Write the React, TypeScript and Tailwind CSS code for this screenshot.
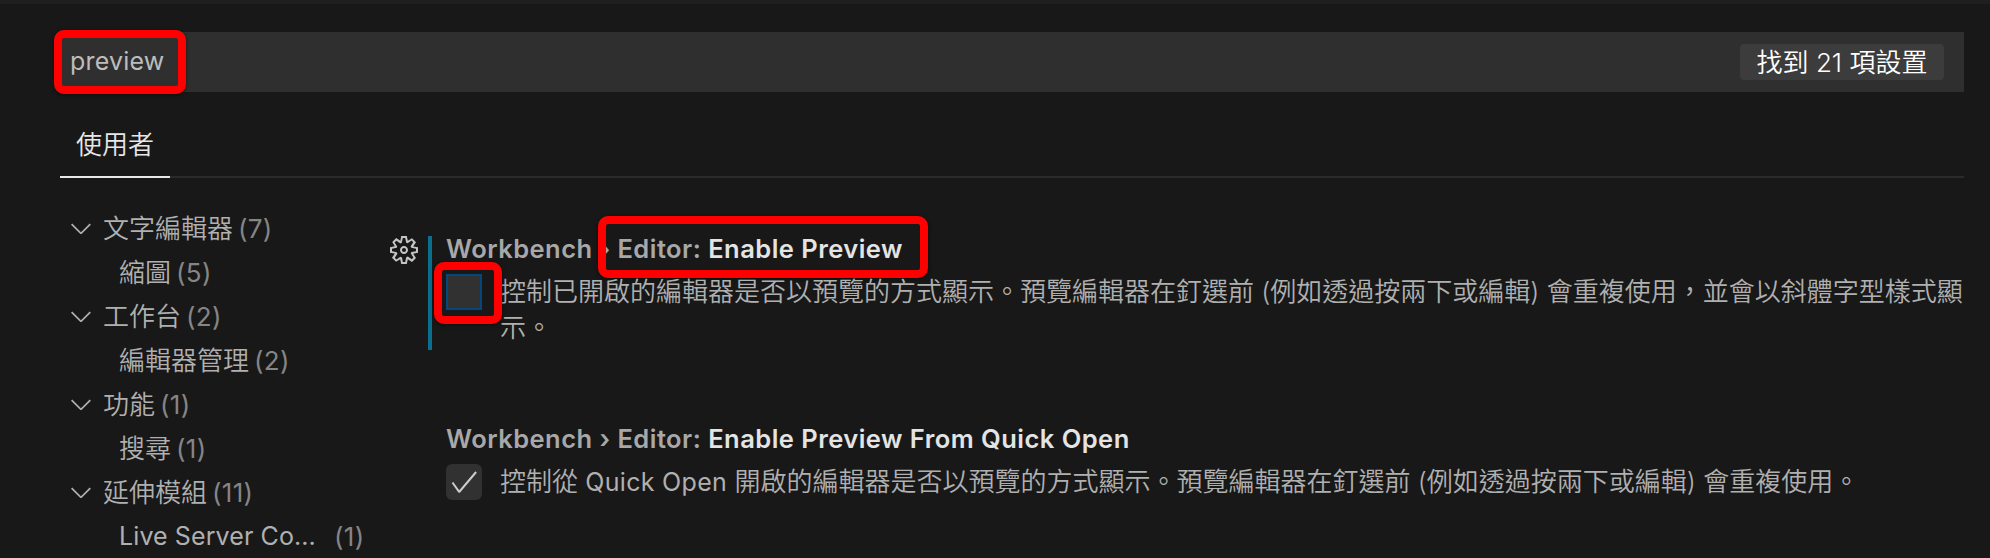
import type { ReactNode } from "react";
import { VscCheck, VscChevronDown, VscGear } from "react-icons/vsc";

type TreeRow = { label: string; count: number; child?: boolean; latin?: boolean };

const rows: TreeRow[] = [
  { label: "文字編輯器", count: 7 },
  { label: "縮圖", count: 5, child: true },
  { label: "工作台", count: 2 },
  { label: "編輯器管理", count: 2, child: true },
  { label: "功能", count: 1 },
  { label: "搜尋", count: 1, child: true },
  { label: "延伸模組", count: 11 },
  { label: "Live Server Co...", count: 1, child: true, latin: true },
];

function Mark({ className }: { className: string }) {
  return (
    <div
      className={`pointer-events-none absolute rounded-[10px] border-8 border-[#ff0000] shadow-[0_1px_4px_rgba(0,0,0,0.5)] ${className}`}
    />
  );
}

function Title({ name, children }: { name: string; children?: ReactNode }) {
  return (
    <h3 className="relative flex h-9 items-center whitespace-pre text-[25.5px] font-[560] leading-9 tracking-[0.47px] text-[#a8a8a8]">
      Workbench › Editor: <span className="text-[#e4e4e4]">{name}</span>
      {children}
    </h3>
  );
}

export default function App() {
  return (
    <div className="h-[558px] w-[1990px] overflow-hidden border-t-4 border-[#1f1f1f] bg-[#181818] pl-[60px] pr-[26px] pt-7 font-['Inter','Noto_Sans_CJK_TC',sans-serif] text-[26px] text-[#b0b0b0]">
      <div className="relative flex h-[60px] items-center justify-between bg-[#2f2f2f] pl-2.5 pr-5">
        <span className="text-[25px] tracking-[0.2px] text-[#bdbdbd]">preview</span>
        <span className="flex h-9 w-[204px] items-center justify-center whitespace-pre rounded bg-[#3c3c3c] font-[350] text-white">找到 21 項設置</span>
        <Mark className="-left-1.5 -top-0.5 h-16 w-33" />
      </div>
      <div className="flex h-[86px] items-end border-b-2 border-[#2b2b2b]">
        <div className="-mb-0.5 flex h-[66px] w-[110px] justify-center border-b-2 border-[#e7e7e7] font-[350] leading-[66px] text-[#e7e7e7]">使用者</div>
      </div>
      <div className="flex pt-7">
        <nav className="w-[320px] shrink-0">
          {rows.map((r) => (
            <div key={r.label} className={`flex h-11 items-center whitespace-pre font-[350] ${r.child ? "pl-[59px]" : "pl-[5px]"}`}>
              {!r.child && <VscChevronDown className="mr-1.5 size-8" />}
              <span className={r.latin ? "w-[215px] pt-0.5 text-[25px] font-normal tracking-[0.1px]" : "mr-[5px]"}>{r.label}</span>
              <span className="font-normal tracking-[0.3px] text-[#858585]">({r.count})</span>
            </div>
          ))}
        </nav>
        <main className="min-w-0 flex-1 pt-[25px]">
          <section className="flex h-[190px] items-start">
            <VscGear className="ml-2 mt-[3px] size-8 shrink-0 text-[#c5c5c5]" />
            <div className="ml-2 mt-[5px] h-[114px] w-1 shrink-0 bg-[#0a6f8f]" />
            <div className="ml-3.5 min-w-0 flex-1">
              <Title name="Enable Preview">
                <Mark className="left-[152px] -top-[15px] h-[62px] w-[330px]" />
              </Title>
              <div className="relative flex items-start pt-[6px]">
                <span className="mt-px size-9 shrink-0 border-2 border-[#04477c] bg-[#313131]" />
                <p className="ml-[18px] mt-px whitespace-pre font-[350] leading-9">
                  控制已開啟的編輯器是否以預覽的方式顯示。預覽編輯器在釘選前 (例如透過按兩下或編輯) 會重複使用，並會以斜體字型樣式顯<br />示。
                </p>
                <Mark className="-left-3 -top-[5px] h-[62px] w-17" />
              </div>
            </div>
          </section>
          <section className="pl-[66px]">
            <Title name="Enable Preview From Quick Open" />
            <div className="flex items-start pt-[6px]">
              <span className="mt-px flex size-9 shrink-0 items-center justify-center rounded-md bg-[#313131]">
                <VscCheck className="size-8 text-[#cccccc]" />
              </span>
              <p className="ml-[18px] mt-px whitespace-pre font-[350] leading-9">
                控制從 <span className="text-[25px] font-normal tracking-[0.3px]">Quick Open</span> 開啟的編輯器是否以預覽的方式顯示。預覽編輯器在釘選前 (例如透過按兩下或編輯) 會重複使用。
              </p>
            </div>
          </section>
        </main>
      </div>
    </div>
  );
}
